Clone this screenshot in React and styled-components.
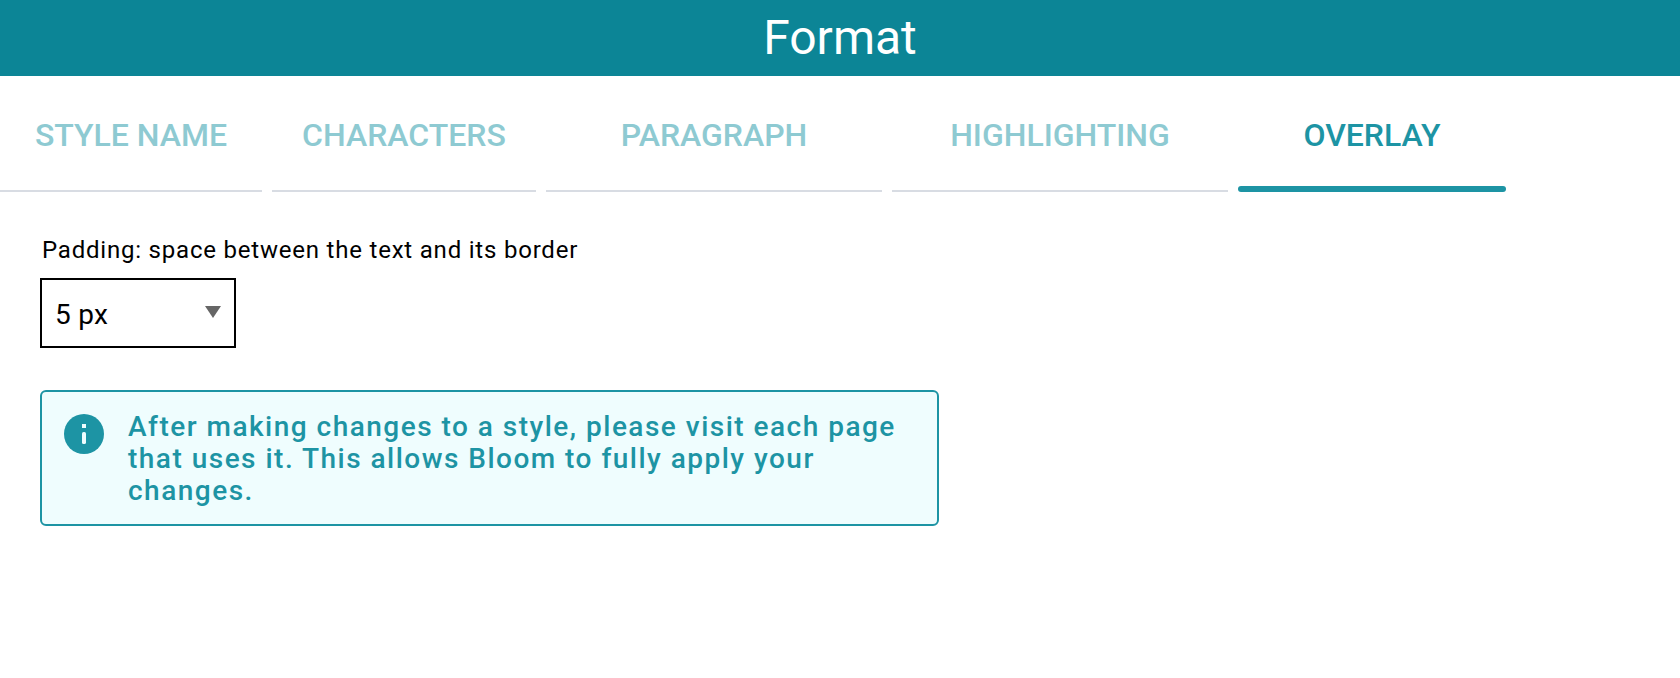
import React, { useState } from "react";
import styled, { createGlobalStyle } from "styled-components";

const GlobalStyle = createGlobalStyle`
  *, *::before, *::after { box-sizing: border-box; }
  body {
    margin: 0;
    background: #ffffff;
    color: #000000;
    font-family: Roboto, "Liberation Sans", sans-serif;
  }
`;

const Header = styled.header`
  display: flex;
  justify-content: center;
  padding: 10px 24px;
  background: #0c8596;
  color: #ffffff;
`;

const Title = styled.h1`
  margin: 0;
  font-size: 48px;
  font-weight: 400;
  line-height: 56px;
`;

const TabBar = styled.div`
  display: flex;
  gap: 10px;
`;

const Tab = styled.button`
  position: relative;
  flex: 0 1 ${({ $width }) => $width}px;
  padding: 42px 0 38px;
  border: 0;
  border-bottom: 2px solid ${({ $active }) => ($active ? "transparent" : "#d8dce3")};
  background: transparent;
  color: ${({ $active }) => ($active ? "#1d94a4" : "#8ecad2")};
  font-family: inherit;
  font-size: 32px;
  font-weight: 500;
  line-height: 34px;
  text-transform: uppercase;
  white-space: nowrap;
  cursor: pointer;

  &::after {
    content: "";
    display: ${({ $active }) => ($active ? "block" : "none")};
    position: absolute;
    right: 0;
    bottom: -2px;
    left: 0;
    height: 6px;
    border-radius: 3px;
    background: #1d94a4;
  }
`;

const Panel = styled.main`
  display: flex;
  flex-direction: column;
  align-items: flex-start;
  padding: 42px 40px;
`;

const Label = styled.label`
  padding: 0 2px;
  font-size: 24px;
  line-height: 32px;
  letter-spacing: 0.033em;
`;

const SelectBox = styled.div`
  display: grid;
  align-items: center;
  width: 196px;
  margin-top: 12px;
`;

const Select = styled.select`
  grid-area: 1 / 1;
  width: 100%;
  height: 70px;
  padding: 2px 44px 0 13px;
  border: 2px solid #000000;
  border-radius: 0;
  background: #ffffff;
  color: #000000;
  font-family: inherit;
  font-size: 28px;
  letter-spacing: 0.01em;
  appearance: none;
`;

const Arrow = styled.svg`
  grid-area: 1 / 1;
  justify-self: end;
  width: 16px;
  height: 12px;
  margin: 0 15px 2px 0;
  pointer-events: none;
`;

const Notice = styled.aside`
  display: flex;
  align-items: flex-start;
  gap: 24px;
  width: 100%;
  max-width: 899px;
  margin-top: 42px;
  padding: 19px 22px 17px;
  border: 2px solid #1d94a4;
  border-radius: 6px;
  background: #effdfe;
  color: #1d94a4;
`;

const InfoIcon = styled.svg`
  flex: none;
  width: 40px;
  height: 40px;
  margin-top: 3px;
`;

const NoticeText = styled.p`
  margin: 0;
  font-size: 28px;
  font-weight: 500;
  line-height: 32px;
  letter-spacing: 0.053em;
`;

const TABS = [
  { label: "Style Name", width: 262 },
  { label: "Characters", width: 264 },
  { label: "Paragraph", width: 336 },
  { label: "Highlighting", width: 336 },
  { label: "Overlay", width: 268 },
];

export default function App() {
  const [active, setActive] = useState("Overlay");
  const [padding, setPadding] = useState("5");

  return (
    <>
      <GlobalStyle />
      <Header>
        <Title>Format</Title>
      </Header>
      <TabBar role="tablist" aria-label="Format">
        {TABS.map(({ label, width }) => (
          <Tab
            key={label}
            type="button"
            role="tab"
            aria-selected={active === label}
            $active={active === label}
            $width={width}
            onClick={() => setActive(label)}
          >
            {label}
          </Tab>
        ))}
      </TabBar>
      <Panel>
        <Label htmlFor="padding">Padding: space between the text and its border</Label>
        <SelectBox>
          <Select id="padding" value={padding} onChange={(e) => setPadding(e.target.value)}>
            <option value="5">5 px</option>
          </Select>
          <Arrow viewBox="0 0 16 12" aria-hidden="true">
            <path d="M0 0h16L8 12z" fill="#666666" />
          </Arrow>
        </SelectBox>
        <Notice>
          <InfoIcon viewBox="0 0 40 40" aria-hidden="true">
            <circle cx="20" cy="20" r="20" fill="#1d94a4" />
            <path d="M18 10h4v4h-4z" fill="#effdfe" />
            <rect x="18" y="18" width="4" height="12" rx="1.6" fill="#effdfe" />
          </InfoIcon>
          <NoticeText>
            After making changes to a style, please visit each page that uses it. This allows
            Bloom to fully apply your changes.
          </NoticeText>
        </Notice>
      </Panel>
    </>
  );
}
